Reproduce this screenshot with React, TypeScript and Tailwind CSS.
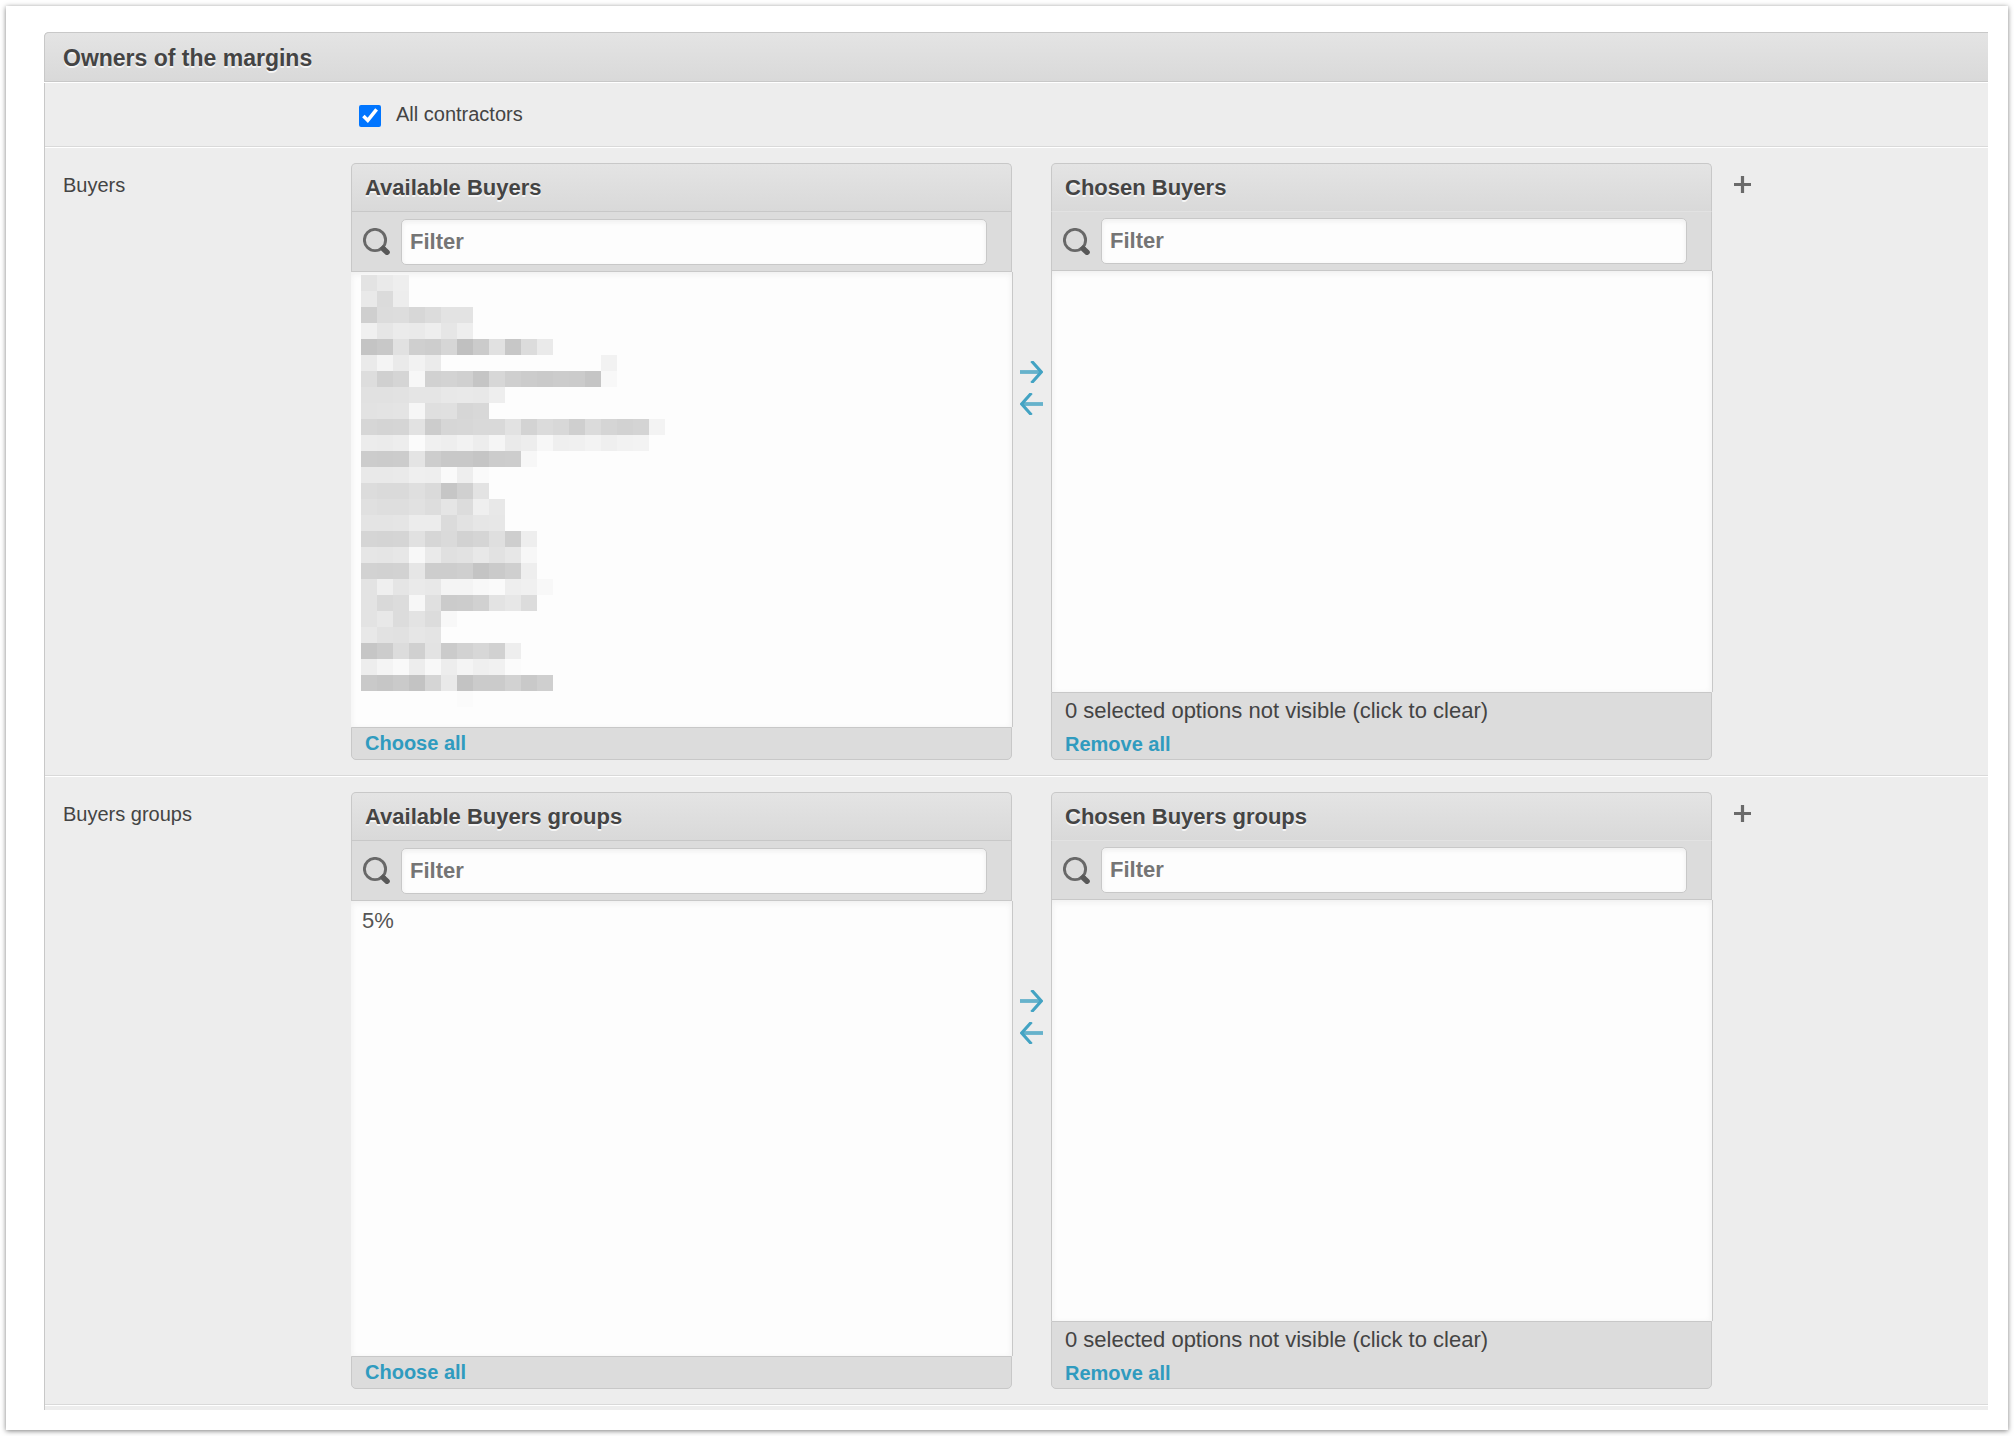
import { useState } from "react"
import clsx from "clsx"

interface SelectorProps {
  id: string
  title: string
  side: "available" | "chosen"
  options?: string[]
  masked?: string[]
}

// Masked names: one string per line, two hex digits of grey per cell, ".." is empty
const maskedBuyers = [
  "e3eaee",
  "e9dbed",
  "cfdcddd7dce3e3",
  "f0e6ebeaeee6ee",
  "c4c8e1cfcdd6c0cbe1c7dcea",
  "eaf4eaf2eb....................f2",
  "ddd0d5f7d1d3d0c5d7cfcccacccbc5f8",
  "e1e1e2e5e5e8e9e8ee",
  "e2e3e4f6dfe0d6d8",
  "d6d4d5e2ccd6d7d9d9e2d3dbd8cfdbd5d2d4f3",
  "ecebedfbf0eef2edf5eaedf7eff0f3eff2f3",
  "cccbcce4cdc8c8c5cccdf7",
  "e9e9eaefeefaeefa",
  "dcdadadfdac6d0e3",
  "e0dedee1dde5dcefe8",
  "e4e4e5ececdbe2e6e7",
  "d5d4d5e1d6dad2d5dfceee",
  "e6e5e7f8eae0e2e8e2e7f7",
  "d2d1d2e6cdcdcfc4cacfee",
  "e3efe5eae8f4f4f8faeef0f8",
  "e3d9dcf7e0cbccd1e3e7dc",
  "e3e8dce3dcf8",
  "e8e2e1e6e4",
  "c6ccdcd0e3cbd2d7d1ee",
  "edf4f9edf8edf4eff1fb",
  "c9c6cac3d5e9c3cbcbd2c9cf",
  "............fb",
]

function Mask({ rows }: { rows: string[] }) {
  return (
    <svg
      className="pointer-events-none absolute top-[3px] left-2.5"
      width={304}
      height={rows.length * 16}
      shapeRendering="crispEdges"
      aria-hidden="true"
    >
      {rows.map((row, y) =>
        (row.match(/../g) || []).map((cell, x) =>
          cell === ".." ? null : (
            <rect key={`${x}-${y}`} x={x * 16} y={y * 16} width={16} height={16} fill={`#${cell}${cell}${cell}`} />
          )
        )
      )}
    </svg>
  )
}

function SearchIcon() {
  return (
    <svg className="shrink-0" width="27" height="27" viewBox="0 0 27 27" fill="none" aria-hidden="true">
      <circle cx="12" cy="12" r="10.6" stroke="#686868" strokeWidth="2.9" />
      <path d="M18.5 18.5 L21.5 21.5" stroke="#606060" strokeWidth="4.5" />
      <path d="M20.5 21 L24 24.2" stroke="#585858" strokeWidth="5.6" strokeLinecap="round" />
    </svg>
  )
}

function ArrowIcon({ back }: { back?: boolean }) {
  return (
    <svg width="23" height="22" viewBox="0 0 23 22" fill="none" aria-hidden="true">
      <g transform={back ? "matrix(-1 0 0 1 23 0)" : undefined}>
        <path d="M0 11 H21" stroke="#66b2cb" strokeWidth="3.8" />
        <path d="M11.5 0 L21.3 11 L11.5 22" stroke="#43a3c3" strokeWidth="3.1" />
      </g>
    </svg>
  )
}

function Selector({ id, title, side, options = [], masked }: SelectorProps) {
  const chosen = side === "chosen"
  return (
    <div className="flex max-w-[661px] min-w-0 flex-1 flex-col">
      <h3 className="flex h-12 items-center rounded-t-[5px] border border-b-0 border-[#c8c8c8] bg-linear-to-b from-[#e4e4e4] to-[#d9d9d9] px-[13px] text-[22px] font-bold [text-shadow:0_2px_0_#f5f5f5]">
        {title}
      </h3>
      <div
        className={clsx(
          "flex items-center gap-[11px] border border-[#c8c8c8] bg-[#dcdcdc] pr-6 pl-[11px]",
          chosen ? "h-[60px] border-t-[#e2e2e2]" : "h-[61px]"
        )}
      >
        <SearchIcon />
        <input
          type="text"
          aria-label={`Filter ${title}`}
          placeholder="Filter"
          className="h-[46px] min-w-0 flex-1 rounded-[5px] border border-[#c8c8c8] bg-[#fdfdfd] px-2 text-[22px] font-bold shadow-[inset_0_2px_5px_#eee] outline-none placeholder:text-[#757575]"
        />
      </div>
      <div className="relative -mr-px flex">
        <select
          id={id}
          multiple
          aria-label={title}
          className={clsx(
            "w-full overflow-hidden border-r border-[#c8c8c8] bg-[#fdfdfd] px-[11px] py-[7px] text-[22px] text-[#555] shadow-[inset_0_2px_6px_#eee] outline-none",
            chosen ? "h-[421px] border-l" : "h-[455px]"
          )}
        >
          {options.map((option) => (
            <option key={option} className="p-0 leading-[30px]">
              {option}
            </option>
          ))}
        </select>
        {masked && <Mask rows={masked} />}
      </div>
      <div
        className={clsx(
          "flex flex-col items-start rounded-b-[5px] border border-[#c8c8c8] bg-[#dcdcdc] px-[13px]",
          chosen ? "h-[68px]" : "h-[33px]"
        )}
      >
        {chosen && (
          <button type="button" className="text-left text-[22px] leading-9">
            0 selected options not visible (click to clear)
          </button>
        )}
        <a href="#" className="text-[20px] leading-[31px] font-bold text-[#309bbf]">
          {chosen ? "Remove all" : "Choose all"}
        </a>
      </div>
    </div>
  )
}

interface RowProps {
  id: string
  name: string
  options?: string[]
  masked?: string[]
}

function SelectorRow({ id, name, options, masked }: RowProps) {
  return (
    <div className="mb-px flex border-b border-[#d9d9d9] py-[15px] pr-5 pl-[18px] shadow-[0_1px_0_#fff]">
      <label htmlFor={`${id}_from`} className="w-72 shrink-0 pt-2 text-[20px] leading-7">
        {name}
      </label>
      <Selector id={`${id}_from`} title={`Available ${name}`} side="available" options={options} masked={masked} />
      <div className="flex w-[39px] shrink-0 flex-col items-center gap-2.5 pt-[198px]">
        <button type="button" aria-label="Choose">
          <ArrowIcon />
        </button>
        <button type="button" aria-label="Remove">
          <ArrowIcon back />
        </button>
      </div>
      <Selector id={`${id}_to`} title={`Chosen ${name}`} side="chosen" />
      <button type="button" aria-label={`Add ${name}`} className="mt-[13px] ml-[22px] h-[17px] w-[17px] shrink-0">
        <svg width="17" height="17" viewBox="0 0 17 17" fill="none" stroke="#6a6a6a" strokeWidth="3.2">
          <path d="M8.5 0 V17 M0 8.5 H17" />
        </svg>
      </button>
    </div>
  )
}

export default function App() {
  const [all, setAll] = useState(true)

  return (
    <div className="bg-white p-1.5 font-['Liberation_Sans',Arial,sans-serif] text-[#444]">
      <main className="bg-white pt-[26px] pr-5 pb-5 pl-[38px] shadow-[0_1px_5px_rgba(0,0,0,0.5)]">
        <section className="rounded-tl-[5px] border-l border-[#c8c8c8] bg-[#ededed] pb-1">
          <h2 className="mb-px -ml-px flex h-[50px] items-center rounded-tl-[5px] border border-r-0 border-[#c8c8c8] bg-linear-to-b from-[#e4e4e4] to-[#d9d9d9] pt-0.5 pl-[18px] text-[23px] font-bold shadow-[0_1px_0_#fff] [text-shadow:0_2px_0_#f5f5f5]">
            Owners of the margins
          </h2>
          <div className="mb-px flex h-16 items-center border-b border-[#d9d9d9] pl-[314px] shadow-[0_1px_0_#fff]">
            <input
              id="all_contractors"
              type="checkbox"
              checked={all}
              onChange={(e) => setAll(e.target.checked)}
              className="mt-0.5 size-[22px]"
            />
            <label htmlFor="all_contractors" className="pb-0.5 pl-[15px] text-[20px] leading-7">
              All contractors
            </label>
          </div>
          <SelectorRow id="buyers" name="Buyers" masked={maskedBuyers} />
          <SelectorRow id="buyers_groups" name="Buyers groups" options={["5%"]} />
        </section>
      </main>
    </div>
  )
}
